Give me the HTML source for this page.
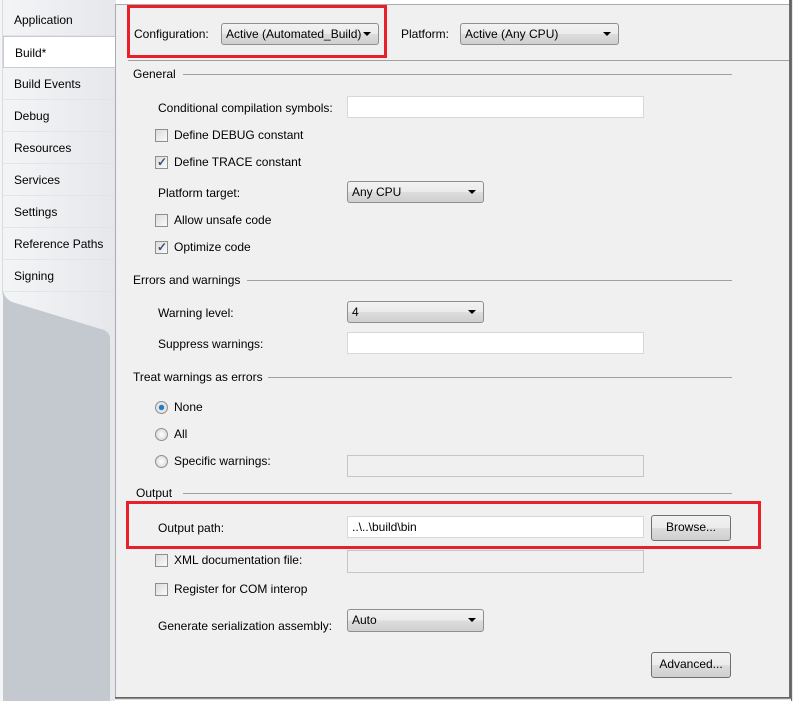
<!DOCTYPE html>
<html><head><style>
*{margin:0;padding:0;box-sizing:border-box}
body{width:795px;height:701px;overflow:hidden;background:#fff;font-family:"Liberation Sans",sans-serif;font-size:12px;color:#000;position:relative}
.a{position:absolute;white-space:nowrap}
.t{position:absolute;line-height:14px}
.tab{position:absolute;left:3px;width:112px;height:32px;padding:9px 0 0 11px;line-height:14px;border-bottom:1px solid #e2e4e8}
.combo{position:absolute;height:22px;border:1px solid #8e8f8f;border-radius:3px;background:linear-gradient(#f2f2f2,#ebebeb 50%,#dddddd 51%,#cfcfcf);padding:3px 0 0 4px;line-height:14px}
.combo:after{content:"";position:absolute;right:7px;top:8px;border-left:4px solid transparent;border-right:4px solid transparent;border-top:4px solid #000}
.tb{position:absolute;height:22px;background:#fff;border:1px solid #d5d8dc;padding:3px 4px;line-height:14px}
.tbd{position:absolute;background:#f0f0f0;border:1px solid #c5c5c5}
.cb{position:absolute;width:13px;height:13px;border:1px solid #8f8f8f;background:linear-gradient(135deg,#dcdcdc,#fafafa)}
.cb.c:after{content:"✓";position:absolute;left:1px;top:-2px;font-size:12px;color:#3b4f7a;font-weight:bold}
.rb{position:absolute;width:13px;height:13px;border-radius:50%;border:1px solid #8f8f8f;background:radial-gradient(#fff,#d0d0d0)}
.rb.c:after{content:"";position:absolute;left:3px;top:3px;width:5px;height:5px;border-radius:50%;background:#1a7fc8;box-shadow:0 0 1px #0b3d6b}
.line{position:absolute;height:1px;background:#a0a0a0}
.btn{position:absolute;border:1px solid #707070;border-radius:3px;background:linear-gradient(#f2f2f2,#ebebeb 50%,#dddddd 51%,#cfcfcf);text-align:center;line-height:23px}
.red{position:absolute;border:3px solid #e8202a}
</style></head><body>
<div class="a" style="left:0;top:0;width:116px;height:701px;background:linear-gradient(90deg,#f4f5f7,#e5e7ea)"></div>
<svg class="a" style="left:0;top:290px" width="116" height="411"><path d="M3 0 Q4 8 12 12 L104 40 Q110 43 110 48 L110 411 L3 411 Z" fill="#c4c8cf"/></svg>
<div class="a" style="left:2px;top:0;width:1px;height:295px;background:#d8dbe0"></div>
<div class="tab" style="top:4px">Application</div>
<div class="tab" style="top:36px;background:#fff;width:114px;border:1px solid #c8ccd2;border-right:none">Build*</div>
<div class="tab" style="top:68px">Build Events</div>
<div class="tab" style="top:100px">Debug</div>
<div class="tab" style="top:132px">Resources</div>
<div class="tab" style="top:164px">Services</div>
<div class="tab" style="top:196px">Settings</div>
<div class="tab" style="top:228px">Reference Paths</div>
<div class="tab" style="top:260px">Signing</div>
<div class="a" style="left:115px;top:4px;width:675px;height:694px;background:#f0f0f0;border-left:1px solid #a8adb5;border-top:1px solid #a8adb5"></div>
<div class="a" style="left:789px;top:0;width:6px;height:701px;background:linear-gradient(90deg,#777,#555 40%,#fff 60%)"></div>
<div class="a" style="left:115px;top:697px;width:676px;height:4px;background:linear-gradient(#555,#888 40%,#fff 70%)"></div>
<div class="line" style="left:128px;top:60px;width:661px"></div>

<div class="red" style="left:127px;top:5px;width:260px;height:53px"></div>
<div class="t" style="left:134px;top:27px">Configuration:</div>
<div class="combo" style="left:221px;top:23px;width:158px">Active (Automated_Build)</div>
<div class="t" style="left:401px;top:27px">Platform:</div>
<div class="combo" style="left:460px;top:23px;width:159px">Active (Any CPU)</div>

<div class="t" style="left:133px;top:67px">General</div><div class="line" style="left:183px;top:74px;width:549px"></div>
<div class="t" style="left:158px;top:101px">Conditional compilation symbols:</div>
<div class="tb" style="left:347px;top:96px;width:297px"></div>
<div class="cb" style="left:155px;top:129px"></div><div class="t" style="left:174px;top:128px">Define DEBUG constant</div>
<div class="cb c" style="left:155px;top:156px"></div><div class="t" style="left:174px;top:155px">Define TRACE constant</div>
<div class="t" style="left:158px;top:186px">Platform target:</div>
<div class="combo" style="left:347px;top:181px;width:137px">Any CPU</div>
<div class="cb" style="left:155px;top:214px"></div><div class="t" style="left:174px;top:213px">Allow unsafe code</div>
<div class="cb c" style="left:155px;top:241px"></div><div class="t" style="left:174px;top:240px">Optimize code</div>

<div class="t" style="left:133px;top:273px">Errors and warnings</div><div class="line" style="left:247px;top:280px;width:485px"></div>
<div class="t" style="left:158px;top:306px">Warning level:</div>
<div class="combo" style="left:347px;top:301px;width:137px">4</div>
<div class="t" style="left:158px;top:337px">Suppress warnings:</div>
<div class="tb" style="left:347px;top:332px;width:297px"></div>

<div class="t" style="left:133px;top:370px">Treat warnings as errors</div><div class="line" style="left:268px;top:377px;width:464px"></div>
<div class="rb c" style="left:155px;top:401px"></div><div class="t" style="left:174px;top:400px">None</div>
<div class="rb" style="left:155px;top:428px"></div><div class="t" style="left:174px;top:427px">All</div>
<div class="rb" style="left:155px;top:455px"></div><div class="t" style="left:174px;top:454px">Specific warnings:</div>
<div class="tbd" style="left:347px;top:455px;width:297px;height:22px"></div>

<div class="t" style="left:136px;top:486px">Output</div><div class="line" style="left:183px;top:493px;width:549px"></div>
<div class="red" style="left:126px;top:501px;width:635px;height:48px"></div>
<div class="t" style="left:158px;top:521px">Output path:</div>
<div class="tb" style="left:347px;top:516px;width:297px">..\..\build\bin</div>
<div class="btn" style="left:651px;top:515px;width:80px;height:26px">Browse...</div>
<div class="cb" style="left:155px;top:554px"></div><div class="t" style="left:174px;top:553px">XML documentation file:</div>
<div class="tbd" style="left:347px;top:550px;width:297px;height:23px"></div>
<div class="cb" style="left:155px;top:583px"></div><div class="t" style="left:174px;top:582px">Register for COM interop</div>
<div class="t" style="left:158px;top:619px">Generate serialization assembly:</div>
<div class="combo" style="left:347px;top:609px;width:137px;height:23px">Auto</div>
<div class="btn" style="left:651px;top:652px;width:80px;height:26px">Advanced...</div>
</body></html>
